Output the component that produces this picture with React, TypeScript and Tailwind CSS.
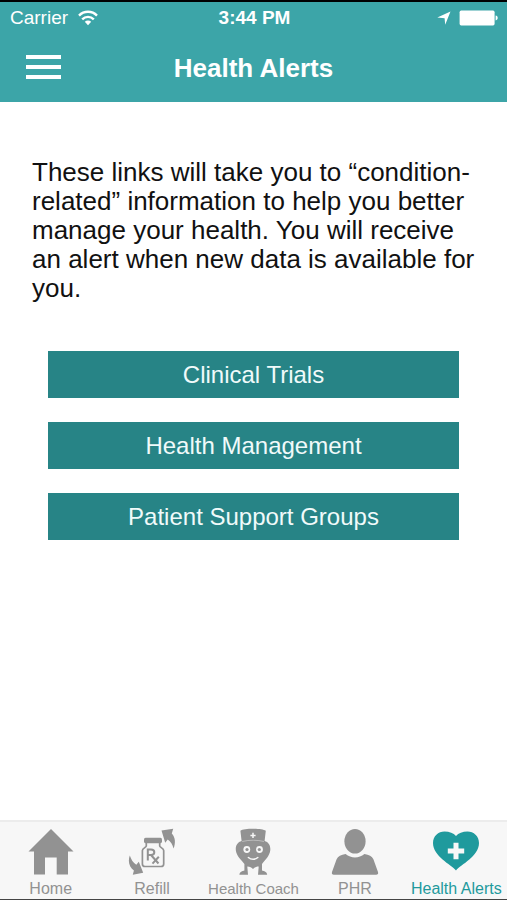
import type { ReactNode } from "react";
import clsx from "clsx";

const LINKS = ["Clinical Trials", "Health Management", "Patient Support Groups"];

function WifiIcon() {
  return (
    <svg aria-hidden viewBox="0 0 20 16" className="w-5 h-4" fill="none" stroke="white" strokeWidth="2.4">
      <path d="M1 5.6 C6 0.5 14 0.5 19 5.6" />
      <path d="M4.2 9.3 C7.5 6 12.5 6 15.8 9.3" />
      <path d="M10 15.2 L6.8 11.8 C8.6 10.2 11.4 10.2 13.2 11.8 Z" fill="white" stroke="none" />
    </svg>
  );
}

function LocationIcon() {
  return (
    <svg aria-hidden viewBox="0 0 14 14" className="w-3.5 h-3.5" fill="white">
      <path d="M13.5 0.5 L8.2 13.8 L7.6 7.2 L0.3 6.4 Z" />
    </svg>
  );
}

function BatteryIcon() {
  return (
    <svg aria-hidden viewBox="0 0 40 16" className="w-10 h-4" fill="white">
      <rect x="0.6" y="0.6" width="35" height="14.8" rx="1.6" />
      <path d="M36.6 5.6 C39.4 5.8 39.4 10.2 36.6 10.4 Z" />
    </svg>
  );
}

function HomeIcon() {
  return (
    <svg aria-hidden viewBox="0 0 48 48" className="w-12 h-12" fill="currentColor">
      <path d="M24 1 L46.5 23.5 H41 V46.5 H29.7 V29.5 H18 V46.5 H7 V23.5 H1.5 Z" />
    </svg>
  );
}

function RefillIcon() {
  return (
    <svg aria-hidden viewBox="0 0 48 48" className="w-12 h-12" fill="currentColor">
      <rect x="16" y="9.8" width="18" height="5.4" rx="1.6" />
      <path
        d="M18.3 15 V18 C18.3 19.3 14.4 20.2 14.4 22.5 V36 C14.4 37.6 15.4 38.5 17 38.5 H33 C34.8 38.5 35.7 37.6 35.7 36 V22.5 C35.7 20.2 31.7 19.3 31.7 18 V15"
        fill="none"
        stroke="currentColor"
        strokeWidth="1.7"
      />
      {/* prescription mark on the bottle */}
      <g fill="none" stroke="currentColor" strokeWidth="2">
        <path d="M19.8 32.5 V21.5 H23 C27.4 21.5 27.4 27 23 27 H19.8 M23 27 L30.5 35.5" />
        <path d="M30.8 28.8 L24.5 35.6" />
      </g>
      <path d="M33.5 2.5 L45.2 0.8 L43.8 5.5 C47.4 9.5 47.8 14.8 45.6 20.5 C44.5 16.3 42.8 13.7 39.7 11.5 L37.2 14.8 Z" />
      <path d="M1.8 27.5 C3.1 31.5 5.2 34.8 8.3 36.8 L10.8 33.7 L15.2 44.8 L4.8 46.8 L5.9 42.4 C1.2 38.9 -0.3 33.5 1.8 27.5 Z" />
    </svg>
  );
}

function CoachIcon() {
  return (
    <svg aria-hidden viewBox="0 0 48 48" className="w-12 h-12" fill="currentColor">
      <path d="M11.4 2.8 C15 0.2 33 0.2 36.8 2.8 L35.6 13 C40.4 14 42.4 19.5 40.8 24.5 C38.8 30 35.5 32.5 33 36 V42.5 C35 43.3 37.9 43.5 38.2 46.8 H29 L29.7 38.5 C27 38.5 25.4 39.5 24 41 C22.6 39.5 21 38.5 18.3 38.5 L19 46.8 H10.4 C10.7 43.5 13.4 43.3 15.4 42.5 V36 C13 32.5 9.3 30 7.3 24.5 C5.7 19.5 7.7 14 12.6 13 Z" />
      <g fill="none" stroke="#f7f7f7">
        <path d="M13.2 13.5 C20 11.8 28.5 11.8 35 13.5" strokeWidth="0.4" />
        <path d="M24 4.8 V10 M21.4 7.4 H26.6" strokeWidth="1.5" />
        <path d="M19.4 29.5 C22 31.8 26.2 31.8 28.8 29.5" strokeWidth="1.5" strokeLinecap="round" />
      </g>
      <g fill="#f7f7f7">
        <circle cx="17.8" cy="21.5" r="3.4" />
        <circle cx="30.5" cy="21.5" r="3.4" />
      </g>
      <circle cx="18" cy="21.5" r="1.6" />
      <circle cx="30.3" cy="21.5" r="1.6" />
    </svg>
  );
}

function PersonIcon() {
  return (
    <svg aria-hidden viewBox="0 0 48 48" className="w-12 h-12" fill="currentColor">
      <ellipse cx="24" cy="13.3" rx="10.6" ry="12.3" />
      <path d="M14.6 26 C20 30.5 28 30.5 33.4 26 C38 26.8 41 28.2 42.4 31.2 L47 44 C47.5 45.8 46.8 46.8 45.2 46.8 H2.8 C1.2 46.8 0.5 45.8 1 44 L5.6 31.2 C7 28.2 10 26.8 14.6 26 Z" />
    </svg>
  );
}

function HeartIcon() {
  return (
    <svg aria-hidden viewBox="0 0 48 48" className="w-12 h-12" fill="currentColor">
      <path d="M24 42.6 C19 36.5 1 28.5 1 15.1 C1 8.1 6.3 3.5 12.5 3.5 C17.5 3.5 21.5 5.2 24 8 C26.5 5.2 30.5 3.5 35.5 3.5 C41.7 3.5 47 8.1 47 15.1 C47 28.5 29 36.5 24 42.6 Z" />
      <path d="M24 14.8 V31.2 M15.8 23 H32.2" stroke="#f7f7f7" strokeWidth="5" />
    </svg>
  );
}

type Tab = { label: string; icon: ReactNode; active?: boolean; compact?: boolean };

const TABS: Tab[] = [
  { label: "Home", icon: <HomeIcon /> },
  { label: "Refill", icon: <RefillIcon /> },
  { label: "Health Coach", icon: <CoachIcon />, compact: true },
  { label: "PHR", icon: <PersonIcon /> },
  { label: "Health Alerts", icon: <HeartIcon />, active: true },
];

function Header() {
  return (
    <header className="border-t-2 border-black bg-[#3ca5a8] text-white">
      <div className="grid grid-cols-3 items-center h-8 pl-2.5 pr-2 text-[19px]">
        <div className="flex items-center gap-2.5">
          <span>Carrier</span>
          <WifiIcon />
        </div>
        <span className="text-center font-bold">3:44 PM</span>
        <div className="flex items-center justify-end gap-2">
          <LocationIcon />
          <BatteryIcon />
        </div>
      </div>
      <div className="grid grid-cols-[80px_1fr_80px] items-center h-17">
        <button type="button" aria-label="Menu" className="flex flex-col gap-[6px] w-[35px] ml-[26px] pb-0.5">
          <span className="h-1 bg-white" />
          <span className="h-1 bg-white" />
          <span className="h-1 bg-white" />
        </button>
        <h1 className="text-center text-[26px] font-bold">Health Alerts</h1>
      </div>
    </header>
  );
}

function TabBar() {
  return (
    <nav className="grid grid-cols-5 border-t-2 border-t-[#ececec] border-b border-b-[#444444] bg-[#f7f7f7]">
      {TABS.map((tab) => (
        <a
          key={tab.label}
          href="#"
          aria-current={tab.active ? "page" : undefined}
          className={clsx(
            "flex flex-col items-center gap-[3px] pt-[6px] leading-5 whitespace-nowrap",
            tab.active ? "text-[#1f9a9d]" : "text-[#929292]",
            tab.compact ? "text-[15px]" : "text-base",
          )}
        >
          {tab.icon}
          <span>{tab.label}</span>
        </a>
      ))}
    </nav>
  );
}

export default function App() {
  return (
    <div className="flex flex-col min-h-screen bg-white text-[#111111] font-['Liberation_Sans',Arial,sans-serif]">
      <Header />
      <main className="flex-1 px-8 pt-14">
        <p className="text-[26px] leading-[29px]">
          These links will take you to “condition-related” information to help you better manage your
          health. You will receive an alert when new data is available for you.
        </p>
        <div className="flex flex-col gap-6 px-4 pt-12">
          {LINKS.map((link) => (
            <button key={link} type="button" className="h-[47px] bg-[#278486] text-2xl text-[#f0fafa]">
              {link}
            </button>
          ))}
        </div>
      </main>
      <TabBar />
    </div>
  );
}
